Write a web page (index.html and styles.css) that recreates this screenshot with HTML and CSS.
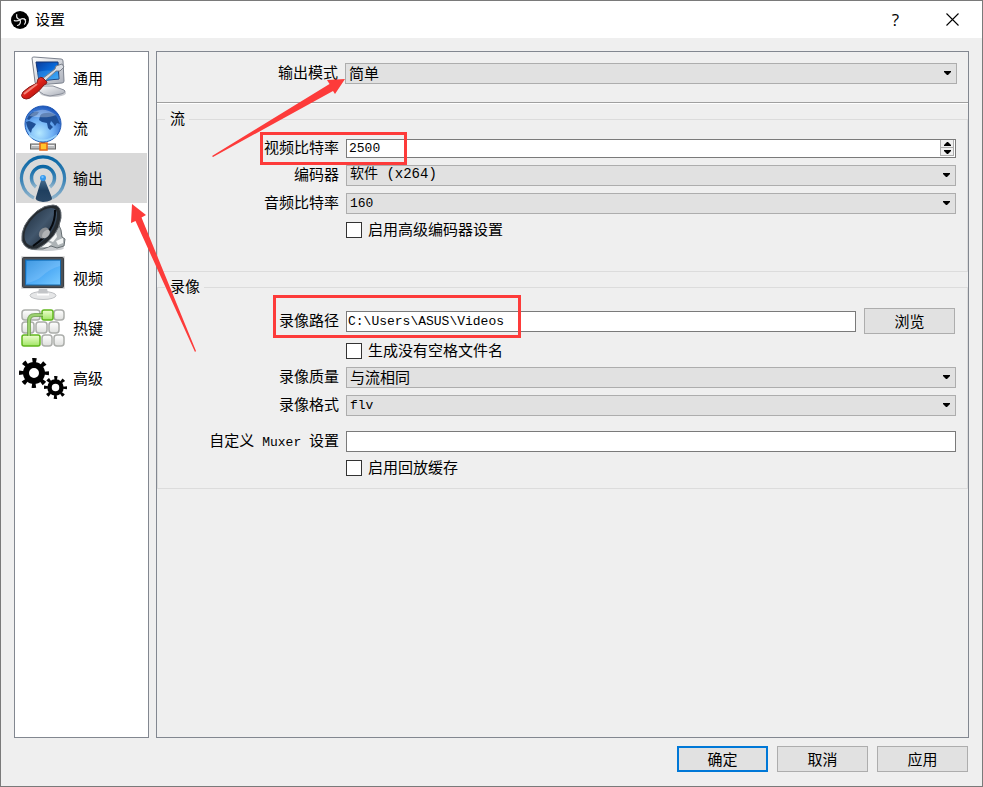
FILE: index.html
```html
<!DOCTYPE html>
<html lang="zh-CN">
<head>
<meta charset="utf-8">
<title>设置</title>
<link rel="stylesheet" href="styles.css">
</head>
<body>
<div class="window">
  <header class="titlebar">
    <svg class="app-icon" viewBox="0 0 18 18" aria-hidden="true">
      <circle cx="9" cy="9" r="9" fill="#000"/>
      <g fill="none" stroke="#e4e4e4" stroke-width="1.2" stroke-linecap="round">
        <path d="M9.200 8.600C7 8.200 5.200 6.500 5.700 3.500M9.200 8.600C11 7.300 13.200 7.400 14.600 9"/>
        <path d="M9.200 8.600C9.800 11.300 9 13.700 6.500 14.500M8.400 9.400C6.500 9.700 4.700 10.600 3.300 9.500"/>
        <path d="M13 7.800C15 9.500 15 11.500 13.500 13.200"/>
      </g>
    </svg>
    <h1 class="title">设置</h1>
    <button class="caption-button" type="button" aria-label="帮助">?</button>
    <button class="caption-button" type="button" aria-label="关闭">
      <svg width="13" height="13" viewBox="0 0 13 13"><path d="M.5 .5l12 12M12.500 .5l-12 12" stroke="#000" stroke-width="1.100"/></svg>
    </button>
  </header>

  <div class="content">
    <nav class="sidebar">
      <a class="nav-item" href="#general">
        <svg class="nav-icon" viewBox="0 0 48 48" aria-hidden="true">
          <defs>
            <linearGradient id="screen" x1="0" y1="0" x2="1" y2="1"><stop offset="0" stop-color="#0a3c9c"/><stop offset=".5" stop-color="#0868d8"/><stop offset="1" stop-color="#49b5f8"/></linearGradient>
            <linearGradient id="metal" x1="0" y1="0" x2="1" y2="1"><stop offset="0" stop-color="#fff"/><stop offset="1" stop-color="#a8adb8"/></linearGradient>
            <linearGradient id="handle" x1="0" y1="0" x2="1" y2="1"><stop offset="0" stop-color="#ff8070"/><stop offset=".5" stop-color="#da2018"/><stop offset="1" stop-color="#8c0b08"/></linearGradient>
          </defs>
          <ellipse cx="34" cy="39" rx="13" ry="4" fill="#c8cad0"/>
          <path d="M23 32L34 32 45 36Q48 38 42 40L31 42Q25 42 18 36Z" fill="url(#metal)" stroke="#8a8f9a"/>
          <path d="M13 4Q13 3 15 3L42 5Q44 5 44 7L45 27Q45 29 43 29L19 31Q16 31 16 28Z" fill="url(#metal)" stroke="#7c828e"/>
          <path d="M17 8L39 8 40 25 20 27Z" fill="url(#screen)" stroke="#133574"/>
          <path d="M18 18Q28 15 39 18L40 25 20 27Z" fill="#4daff5" opacity=".35"/>
          <path d="M23 25L36 15 37 12 43 10 45 13 41 17 37 17 26 27Z" fill="#d9dce2" stroke="#7b808a"/>
          <path d="M19 25Q22 22 24 24L28 28Q28 30 25 31Q21 37 11 44Q7 46 4 44Q1 42 4 38Q9 33 18 29Z" fill="url(#handle)" stroke="#861a17"/>
          <path d="M5 40L18 30" stroke="#ffb0a2" stroke-width="2" opacity=".7"/>
        </svg>
        <span>通用</span>
      </a>
      <a class="nav-item" href="#stream">
        <svg class="nav-icon" viewBox="0 0 48 48" aria-hidden="true">
          <defs><radialGradient id="globe" cx=".4" cy=".75" r=".75"><stop offset="0" stop-color="#b4e8ff"/><stop offset=".5" stop-color="#6fb0f5"/><stop offset="1" stop-color="#1f58bd"/></radialGradient></defs>
          <path d="M24 37V43" stroke="#777" stroke-width="4"/>
          <rect x="11.500" y="40" width="25" height="5" fill="#b9bbbe" stroke="#666"/>
          <path d="M13 41.500H35" stroke="#eee"/>
          <rect x="21" y="39" width="7" height="7" fill="#ffc52d" stroke="#e46418" stroke-width="1.500"/>
          <circle cx="24" cy="20" r="18" fill="url(#globe)" stroke="#1d56b4"/>
          <path d="M7 18L10 17 13 18 17 20 15 23 13 25 12 29Q8 25 7 18M10 11Q15 6 20 8L18 11 13 13 10 16 8 15M21 12Q22 9 27 9Q34 8 38 13L41 20 38 19 36 22 34 19 32 17 31 20 34 23 31 26 29 24 28 19 23 18 20 16Z" fill="#1f4f96"/>
          <path d="M10 12Q22 0 37 11Q28 15 10 12" fill="#fff" opacity=".3"/>
          <path d="M10 31Q24 42 38 31" fill="none" stroke="#aee6ff" stroke-width="2" opacity=".6"/>
        </svg>
        <span>流</span>
      </a>
      <a class="nav-item nav-item-active" href="#output" aria-current="page">
        <svg class="nav-icon" viewBox="0 0 48 48" aria-hidden="true">
          <defs>
            <linearGradient id="wave" x1="0" y1="0" x2="0" y2="1"><stop offset="0" stop-color="#0a66a4"/><stop offset=".6" stop-color="#3f86b8"/><stop offset="1" stop-color="#90b4cc"/></linearGradient>
            <linearGradient id="mast" x1="0" y1="0" x2="0" y2="1"><stop offset="0" stop-color="#4a7194"/><stop offset=".5" stop-color="#1f3f5f"/><stop offset="1" stop-color="#2a4867"/></linearGradient>
          </defs>
          <path d="M15 44A21.500 21.500 0 1 1 33 44" fill="none" stroke="url(#wave)" stroke-width="3.200"/>
          <path d="M17 33A11.500 11.500 0 1 1 31 33" fill="none" stroke="url(#wave)" stroke-width="3.500"/>
          <path d="M22.500 25H25.500L33 44Q34 47 24 48Q15 47 17 43Z" fill="url(#mast)"/>
          <circle cx="24" cy="24" r="3" fill="#3699ed"/>
          <circle cx="23.500" cy="23" r="1.200" fill="#76c2ff"/>
        </svg>
        <span>输出</span>
      </a>
      <a class="nav-item" href="#audio">
        <svg class="nav-icon" viewBox="0 0 48 48" aria-hidden="true">
          <defs><linearGradient id="cone" x1="0" y1="0" x2="1" y2="1"><stop offset="0" stop-color="#1b2a3a"/><stop offset=".5" stop-color="#42576d"/><stop offset="1" stop-color="#151d27"/></linearGradient></defs>
          <ellipse cx="27" cy="44" rx="18" ry="3" fill="#c9cccf"/>
          <path d="M39 19L42 26 43 33 46 35 45 42 38 44 32 42 24 45 15 45 22 36Z" fill="#adb3b6" stroke="#666e72"/>
          <path d="M29 36L37 28 38 33 34 38M37 37L44 34 44 39 39 41M23 43L29 38 33 40 29 43" fill="#f3f5f5"/>
          <path d="M34 1Q43 1 42 14Q39 34 18 45Q7 47 3 37Q1 21 18 7Q26 1 34 1Z" fill="#252b30" stroke="#626970"/>
          <path d="M32 4Q39 4 38 13Q36 30 18 41Q9 44 6 36Q3 24 18 10Q26 4 32 4Z" fill="url(#cone)"/>
          <path d="M36 6Q37 27 14 42" fill="none" stroke="#06090d" stroke-width="2"/>
          <ellipse cx="25" cy="29" rx="4.500" ry="6" transform="rotate(40 25 29)" fill="#8b8f94"/>
          <ellipse cx="27" cy="30" rx="3" ry="5" transform="rotate(40 27 30)" fill="#b1b3b5"/>
        </svg>
        <span>音频</span>
      </a>
      <a class="nav-item" href="#video">
        <svg class="nav-icon" viewBox="0 0 48 48" aria-hidden="true">
          <defs><linearGradient id="display" x1="0" y1="0" x2="1" y2="1"><stop offset="0" stop-color="#2088dc"/><stop offset=".5" stop-color="#4ca9f5"/><stop offset="1" stop-color="#79caff"/></linearGradient></defs>
          <ellipse cx="24" cy="41.500" rx="13" ry="4" fill="#e5e6e7" stroke="#bfc1c4"/>
          <path d="M20 34H28L29 40Q24 42 19 40Z" fill="#c3c5c8"/>
          <rect x="2" y="2" width="44" height="33" rx="1" fill="#ddd"/>
          <rect x="3.500" y="3.500" width="41" height="30" rx="1" fill="#4b5056" stroke="#3a3e43"/>
          <rect x="6.500" y="6" width="35" height="25" fill="url(#display)" stroke="#1768aa"/>
          <path d="M8 7H41V12Q30 15 22 23Q17 27 8 29Z" fill="#fff" opacity=".14"/>
          <path d="M18 40.500H30" stroke="#fff" stroke-width="2"/>
        </svg>
        <span>视频</span>
      </a>
      <a class="nav-item" href="#hotkeys">
        <svg class="nav-icon" viewBox="0 0 48 48" aria-hidden="true">
          <defs><linearGradient id="key" x1="0" y1="0" x2="0" y2="1"><stop offset="0" stop-color="#fff"/><stop offset="1" stop-color="#dedfdd"/></linearGradient><linearGradient id="greenkey" x1="0" y1="0" x2="0" y2="1"><stop offset="0" stop-color="#efffd0"/><stop offset="1" stop-color="#a1e565"/></linearGradient></defs>
          <g fill="url(#key)" stroke="#acaeab" stroke-width="1.500">
            <rect x="3" y="6" width="18" height="10" rx="3"/><rect x="35" y="6" width="10" height="10" rx="3"/>
            <rect x="3" y="18" width="12" height="11" rx="3"/><rect x="17" y="18" width="11" height="11" rx="3"/><rect x="30" y="18" width="10" height="11" rx="3"/>
            <rect x="23" y="31" width="10" height="11" rx="3"/><rect x="35" y="31" width="10" height="11" rx="3"/>
          </g>
          <g fill="url(#greenkey)" stroke="#60b61d" stroke-width="1.500"><rect x="23" y="6" width="11" height="10" rx="2"/><rect x="3" y="31" width="18" height="11" rx="2"/></g>
          <path d="M24 11H16Q10 11 10 17V32" fill="none" stroke="#679e40" stroke-width="4" opacity=".8"/>
          <path d="M24 11H16Q10 11 10 17V32" fill="none" stroke="#9bd16e" stroke-width="2"/>
        </svg>
        <span>热键</span>
      </a>
      <a class="nav-item" href="#advanced">
        <svg class="nav-icon" viewBox="0 0 48 48" aria-hidden="true">
          <circle cx="15" cy="19" r="8" fill="none" stroke="#000" stroke-width="6"/>
          <circle cx="15" cy="19" r="12.500" fill="none" stroke="#000" stroke-width="5" stroke-dasharray="4 5.817" stroke-dashoffset="2"/>
          <circle cx="36.500" cy="33.500" r="6" fill="none" stroke="#000" stroke-width="4.500"/>
          <circle cx="36.500" cy="33.500" r="9.500" fill="none" stroke="#000" stroke-width="4" stroke-dasharray="3 4.461" stroke-dashoffset="1.500"/>
        </svg>
        <span>高级</span>
      </a>
    </nav>

    <main class="panel">
      <div class="mode-bar">
        <div class="row">
          <label class="label" for="mode">输出模式</label>
          <div class="combo"><select id="mode"><option>简单</option><option>高级</option></select><svg class="arrow" viewBox="0 0 7 4" aria-hidden="true"><path d="M0 0H7V1L4 4H3L0 1Z"/></svg></div>
        </div>
      </div>

      <fieldset class="group group-stream">
        <legend>流</legend>
        <div class="row">
          <label class="label" for="vbitrate">视频比特率</label>
          <div class="spin">
            <input class="latin" id="vbitrate" type="number" value="2500">
            <div class="spin-buttons">
              <button type="button" aria-label="增加"><svg width="7" height="4" viewBox="0 0 7 4"><path d="M0 4V3L3 0H4L7 3V4Z"/></svg></button>
              <button type="button" aria-label="减少"><svg width="7" height="4" viewBox="0 0 7 4"><path d="M0 0H7V1L4 4H3L0 1Z"/></svg></button>
            </div>
          </div>
        </div>
        <div class="row">
          <label class="label" for="encoder">编码器</label>
          <div class="combo"><select class="mixed" id="encoder"><option>软件 (x264)</option></select><svg class="arrow" viewBox="0 0 7 4" aria-hidden="true"><path d="M0 0H7V1L4 4H3L0 1Z"/></svg></div>
        </div>
        <div class="row">
          <label class="label" for="abitrate">音频比特率</label>
          <div class="combo"><select class="latin" id="abitrate"><option>160</option></select><svg class="arrow" viewBox="0 0 7 4" aria-hidden="true"><path d="M0 0H7V1L4 4H3L0 1Z"/></svg></div>
        </div>
        <div class="row">
          <label class="check"><input type="checkbox"><span>启用高级编码器设置</span></label>
        </div>
      </fieldset>

      <fieldset class="group group-record">
        <legend>录像</legend>
        <div class="row row-path">
          <label class="label" for="path">录像路径</label>
          <div class="path">
            <input class="latin" id="path" type="text" value="C:\Users\ASUS\Videos">
            <button class="button" type="button">浏览</button>
          </div>
        </div>
        <div class="row">
          <label class="check"><input type="checkbox"><span>生成没有空格文件名</span></label>
        </div>
        <div class="row">
          <label class="label" for="quality">录像质量</label>
          <div class="combo"><select id="quality"><option>与流相同</option></select><svg class="arrow" viewBox="0 0 7 4" aria-hidden="true"><path d="M0 0H7V1L4 4H3L0 1Z"/></svg></div>
        </div>
        <div class="row">
          <label class="label" for="format">录像格式</label>
          <div class="combo"><select class="latin" id="format"><option>flv</option><option>mp4</option></select><svg class="arrow" viewBox="0 0 7 4" aria-hidden="true"><path d="M0 0H7V1L4 4H3L0 1Z"/></svg></div>
        </div>
        <div class="row row-muxer">
          <label class="label" for="muxer">自定义<span class="latin"> Muxer </span>设置</label>
          <input class="latin" id="muxer" type="text">
        </div>
        <div class="row">
          <label class="check"><input type="checkbox"><span>启用回放缓存</span></label>
        </div>
      </fieldset>
    </main>
  </div>

  <footer class="actions">
    <button class="button button-default" type="button">确定</button>
    <button class="button" type="button">取消</button>
    <button class="button" type="button">应用</button>
  </footer>

  <svg class="callouts" width="530" height="360" viewBox="0 0 530 360" aria-hidden="true">
    <g fill="none" stroke="#fd3b3a" stroke-width="3">
      <rect x="261.500" y="133.500" width="144" height="30"/>
      <rect x="274.500" y="296.500" width="245" height="40"/>
    </g>
    <g fill="#fd3b3a">
      <path d="M345 79L327 80 329.500 84 212 156 213 157 333 91 335 94Z"/>
      <path d="M132 204L146 215 141.500 217.500 196 351 195 352 135.500 221 131 223Z"/>
    </g>
  </svg>
</div>
</body>
</html>
```
FILE: styles.css
```css
* {
  box-sizing: border-box;
}

body {
  margin: 0;
  font: 15px/20px "Noto Sans CJK SC", sans-serif;
  color: #000;
}

button,
input,
select {
  margin: 0;
  font: inherit;
  color: inherit;
  border-radius: 0;
}

.window {
  position: relative;
  display: flex;
  flex-direction: column;
  min-height: 100vh;
  border: 1px solid #7a7a7a;
  background: #efefef;
}

.titlebar {
  display: flex;
  align-items: center;
  height: 37px;
  padding: 0 1px 0 10px;
  background: #fff;
}

.app-icon {
  width: 18px;
  height: 18px;
}

.title {
  flex: 1;
  margin: 0 0 0 6px;
  padding-bottom: 2px;
  font-size: 15px;
  font-weight: 400;
}

.caption-button {
  display: flex;
  align-items: center;
  justify-content: center;
  width: 57px;
  height: 37px;
  padding: 0;
  border: 0;
  background: none;
  font: 17px/20px "Open Sans", sans-serif;
}

.content {
  flex: 1;
  display: flex;
  gap: 7px;
  padding: 13px 13px 8px;
}

.sidebar,
.panel {
  border: 1px solid #828790;
}

.sidebar {
  flex: none;
  width: 135px;
  padding: 1px;
  background: #fff;
}

.nav-item {
  display: flex;
  align-items: center;
  gap: 6px;
  height: 50px;
  padding-left: 3px;
  color: #000;
  text-decoration: none;
}

.nav-item-active {
  background: #d9d9d9;
}

.nav-icon {
  width: 48px;
  height: 48px;
}

.panel {
  flex: 1;
  min-width: 0;
}

.mode-bar {
  height: 51px;
  padding: 11px 11px 0 7px;
  border-bottom: 1px solid #a0a0a0;
  box-shadow: 0 1px #fff;
}

.row {
  display: grid;
  grid-template-columns: 174px minmax(0, 1fr);
  column-gap: 7px;
  align-items: center;
}

.label {
  padding-bottom: 3px;
  text-align: right;
  line-height: 16px;
  white-space: pre;
}

.latin,
.mixed {
  font-family: "Liberation Mono", "Noto Sans CJK SC", monospace;
  font-size: 13px;
}

.mixed {
  font-size: 14px;
}

.label .latin {
  line-height: 1px;
}

.group {
  display: flex;
  flex-direction: column;
  gap: 7px;
  min-width: 0;
  margin: 0;
  padding: 10px 11px 11px 7px;
  border: 1px solid #dcdcdc;
}

.group legend {
  padding: 0 4px 2px 5px;
  line-height: 18px;
}

.group-stream {
  margin-top: 6px;
  padding-bottom: 32px;
}

.group-record {
  margin-top: 5px;
}

.row-path {
  min-height: 28px;
}

.row-muxer {
  margin-top: 8px;
}

.combo {
  position: relative;
  display: flex;
}

.combo select {
  appearance: none;
  width: 100%;
  height: 21px;
  padding: 0 20px 2px 3px;
  border: 1px solid #adadad;
  background: #e1e1e1;
  line-height: 17px;
}

.combo .latin {
  padding-bottom: 0;
}

.arrow {
  position: absolute;
  top: 8px;
  right: 6px;
  width: 7px;
  height: 4px;
  pointer-events: none;
}

input[type="text"],
.spin {
  width: 100%;
  height: 21px;
  padding: 0 1px;
  border: 1px solid #7a7a7a;
  background: #fff;
}

.spin {
  display: flex;
  height: 19px;
}

.spin input {
  appearance: textfield;
  flex: 1;
  min-width: 0;
  padding: 0 1px;
  border: 0;
  background: none;
}

.spin input::-webkit-inner-spin-button {
  appearance: none;
}

.spin-buttons {
  display: flex;
  flex-direction: column;
  width: 14px;
  padding-bottom: 1px;
}

.spin-buttons button {
  flex: 1;
  display: flex;
  align-items: center;
  justify-content: center;
  min-height: 0;
  padding: 0;
  border: 1px solid #adadad;
  border-top: 0;
  background: #f0f0f0;
}

.check {
  grid-column: 2;
  display: flex;
  align-items: center;
  gap: 6px;
  height: 18px;
}

.check span {
  padding-bottom: 2px;
}

.check input {
  appearance: none;
  width: 16px;
  height: 16px;
  border: 1px solid #333;
  background: #fff;
}

.path {
  display: flex;
  align-items: center;
  gap: 8px;
  padding-right: 1px;
}

.path input[type="text"] {
  flex: 1;
  min-width: 0;
}

.button {
  flex: none;
  width: 91px;
  height: 26px;
  padding: 0 0 1px;
  border: 1px solid #adadad;
  background: #e1e1e1;
}

.button-default {
  border: 2px solid #0078d7;
}

.actions {
  display: flex;
  justify-content: flex-end;
  gap: 9px;
  padding: 0 14px 14px;
}

.callouts {
  position: absolute;
  top: -1px;
  left: -1px;
  pointer-events: none;
}
```
